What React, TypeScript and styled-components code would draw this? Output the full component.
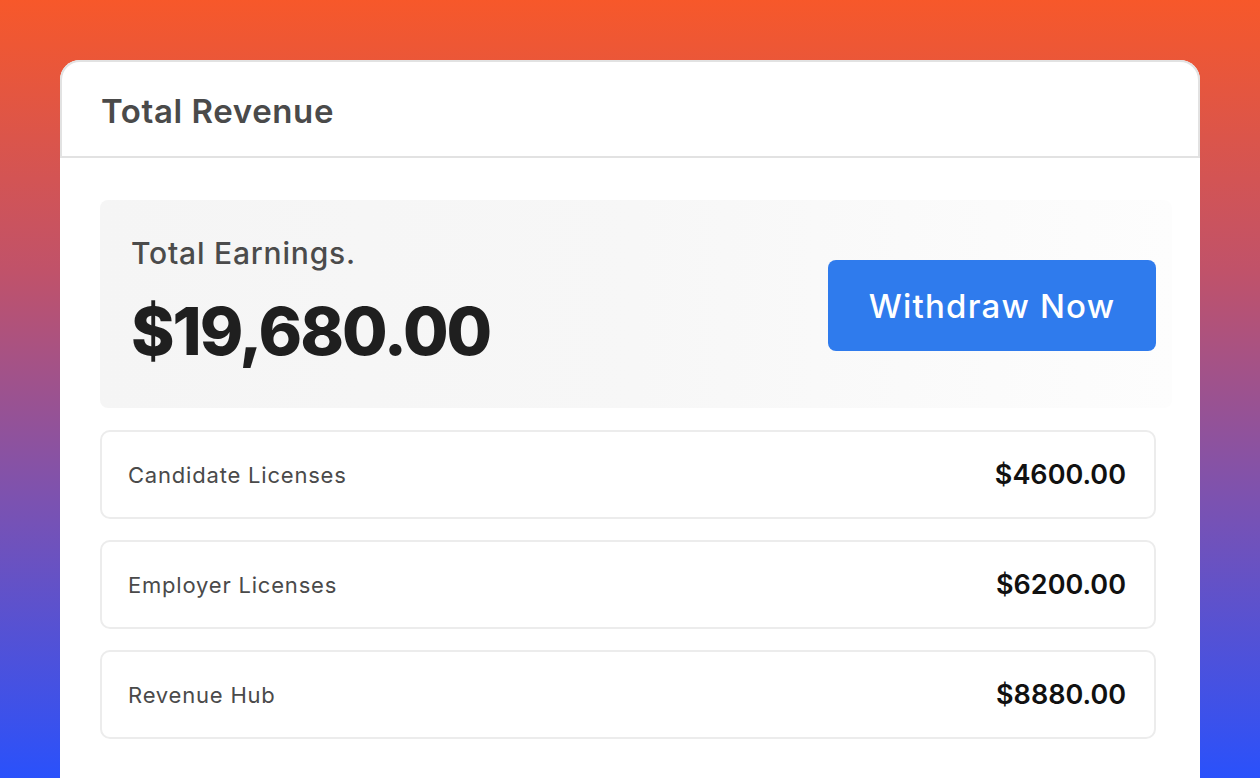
import React from "react";
import styled, { createGlobalStyle } from "styled-components";

const Global = createGlobalStyle`
  html, body { margin: 0; padding: 0; }
  body {
    width: 1260px;
    height: 778px;
    overflow: hidden;
    background: linear-gradient(180deg, #f7582a 0%, #c0526a 35%, #7a52b2 65%, #2a51fb 100%);
    font-family: Inter, "Open Sans", sans-serif;
  }
`;

const Page = styled.div`
  padding: 60px 60px 0 60px;
  box-sizing: border-box;
  height: 778px;
`;

const Card = styled.div`
  width: 1140px;
  height: 718px;
  background: #fff;
  border-radius: 20px 20px 0 0;
  display: flex;
  flex-direction: column;
`;

const Header = styled.div`
  height: 98px;
  box-sizing: border-box;
  border: 2px solid #e2e2e2;
  border-radius: 20px 20px 0 0;
  display: flex;
  align-items: center;
  padding: 3px 0 0 39px;
`;

const Title = styled.h1`
  margin: 0;
  font-family: Inter, sans-serif;
  font-size: 33px;
  font-weight: 600;
  color: #4a4a4a;
  letter-spacing: 0.6px;
`;

const Body = styled.div`
  padding: 42px 44px 0 40px;
  display: flex;
  flex-direction: column;
  gap: 22px;
`;

const Earnings = styled.div`
  height: 208px;
  margin-right: -16px;
  box-sizing: border-box;
  border-radius: 8px;
  background: linear-gradient(90deg, #f5f5f5 0%, #f7f7f7 50%, #fdfdfd 100%);
  display: flex;
  align-items: center;
  justify-content: space-between;
  padding: 0 16px 0 31px;
`;

const EarnInfo = styled.div`
  align-self: flex-start;
  display: flex;
  flex-direction: column;
  padding-top: 38px;
`;

const EarnLabel = styled.div`
  font-size: 30px;
  font-weight: 500;
  color: #4b4b4b;
  line-height: 30px;
  letter-spacing: 0.8px;
`;

const EarnValue = styled.div`
  font-size: 66px;
  font-weight: 800;
  color: #1f1f1f;
  line-height: 66px;
  margin-top: 30px;
  letter-spacing: -2px;
`;

const WithdrawButton = styled.button`
  width: 328px;
  height: 91px;
  border: none;
  border-radius: 8px;
  background: #2f7bed;
  color: #fff;
  font-family: Inter, sans-serif;
  font-size: 33px;
  font-weight: 500;
  letter-spacing: 1.2px;
  cursor: pointer;
  margin-top: 3px;
`;

const Rows = styled.div`
  display: flex;
  flex-direction: column;
  gap: 21px;
`;

const Row = styled.div`
  height: 89px;
  box-sizing: border-box;
  border: 2px solid #ececec;
  border-radius: 10px;
  display: flex;
  align-items: center;
  justify-content: space-between;
  padding: 0 28px 0 26px;
`;

const RowLabel = styled.span`
  font-size: 22px;
  font-weight: 400;
  color: #4a4a4a;
  letter-spacing: 0.8px;
`;

const RowAmount = styled.span`
  font-family: Inter, "Liberation Sans", sans-serif;
  font-size: 27px;
  font-weight: 600;
  color: #111;
`;

const items = [
  { label: "Candidate Licenses", amount: "$4600.00" },
  { label: "Employer Licenses", amount: "$6200.00" },
  { label: "Revenue Hub", amount: "$8880.00" },
];

export default function App() {
  return (
    <>
      <Global />
      <Page>
        <Card>
          <Header>
            <Title>Total Revenue</Title>
          </Header>
          <Body>
            <Earnings>
              <EarnInfo>
                <EarnLabel>Total Earnings.</EarnLabel>
                <EarnValue>$19,680.00</EarnValue>
              </EarnInfo>
              <WithdrawButton>Withdraw Now</WithdrawButton>
            </Earnings>
            <Rows>
              {items.map((it) => (
                <Row key={it.label}>
                  <RowLabel>{it.label}</RowLabel>
                  <RowAmount>{it.amount}</RowAmount>
                </Row>
              ))}
            </Rows>
          </Body>
        </Card>
      </Page>
    </>
  );
}
